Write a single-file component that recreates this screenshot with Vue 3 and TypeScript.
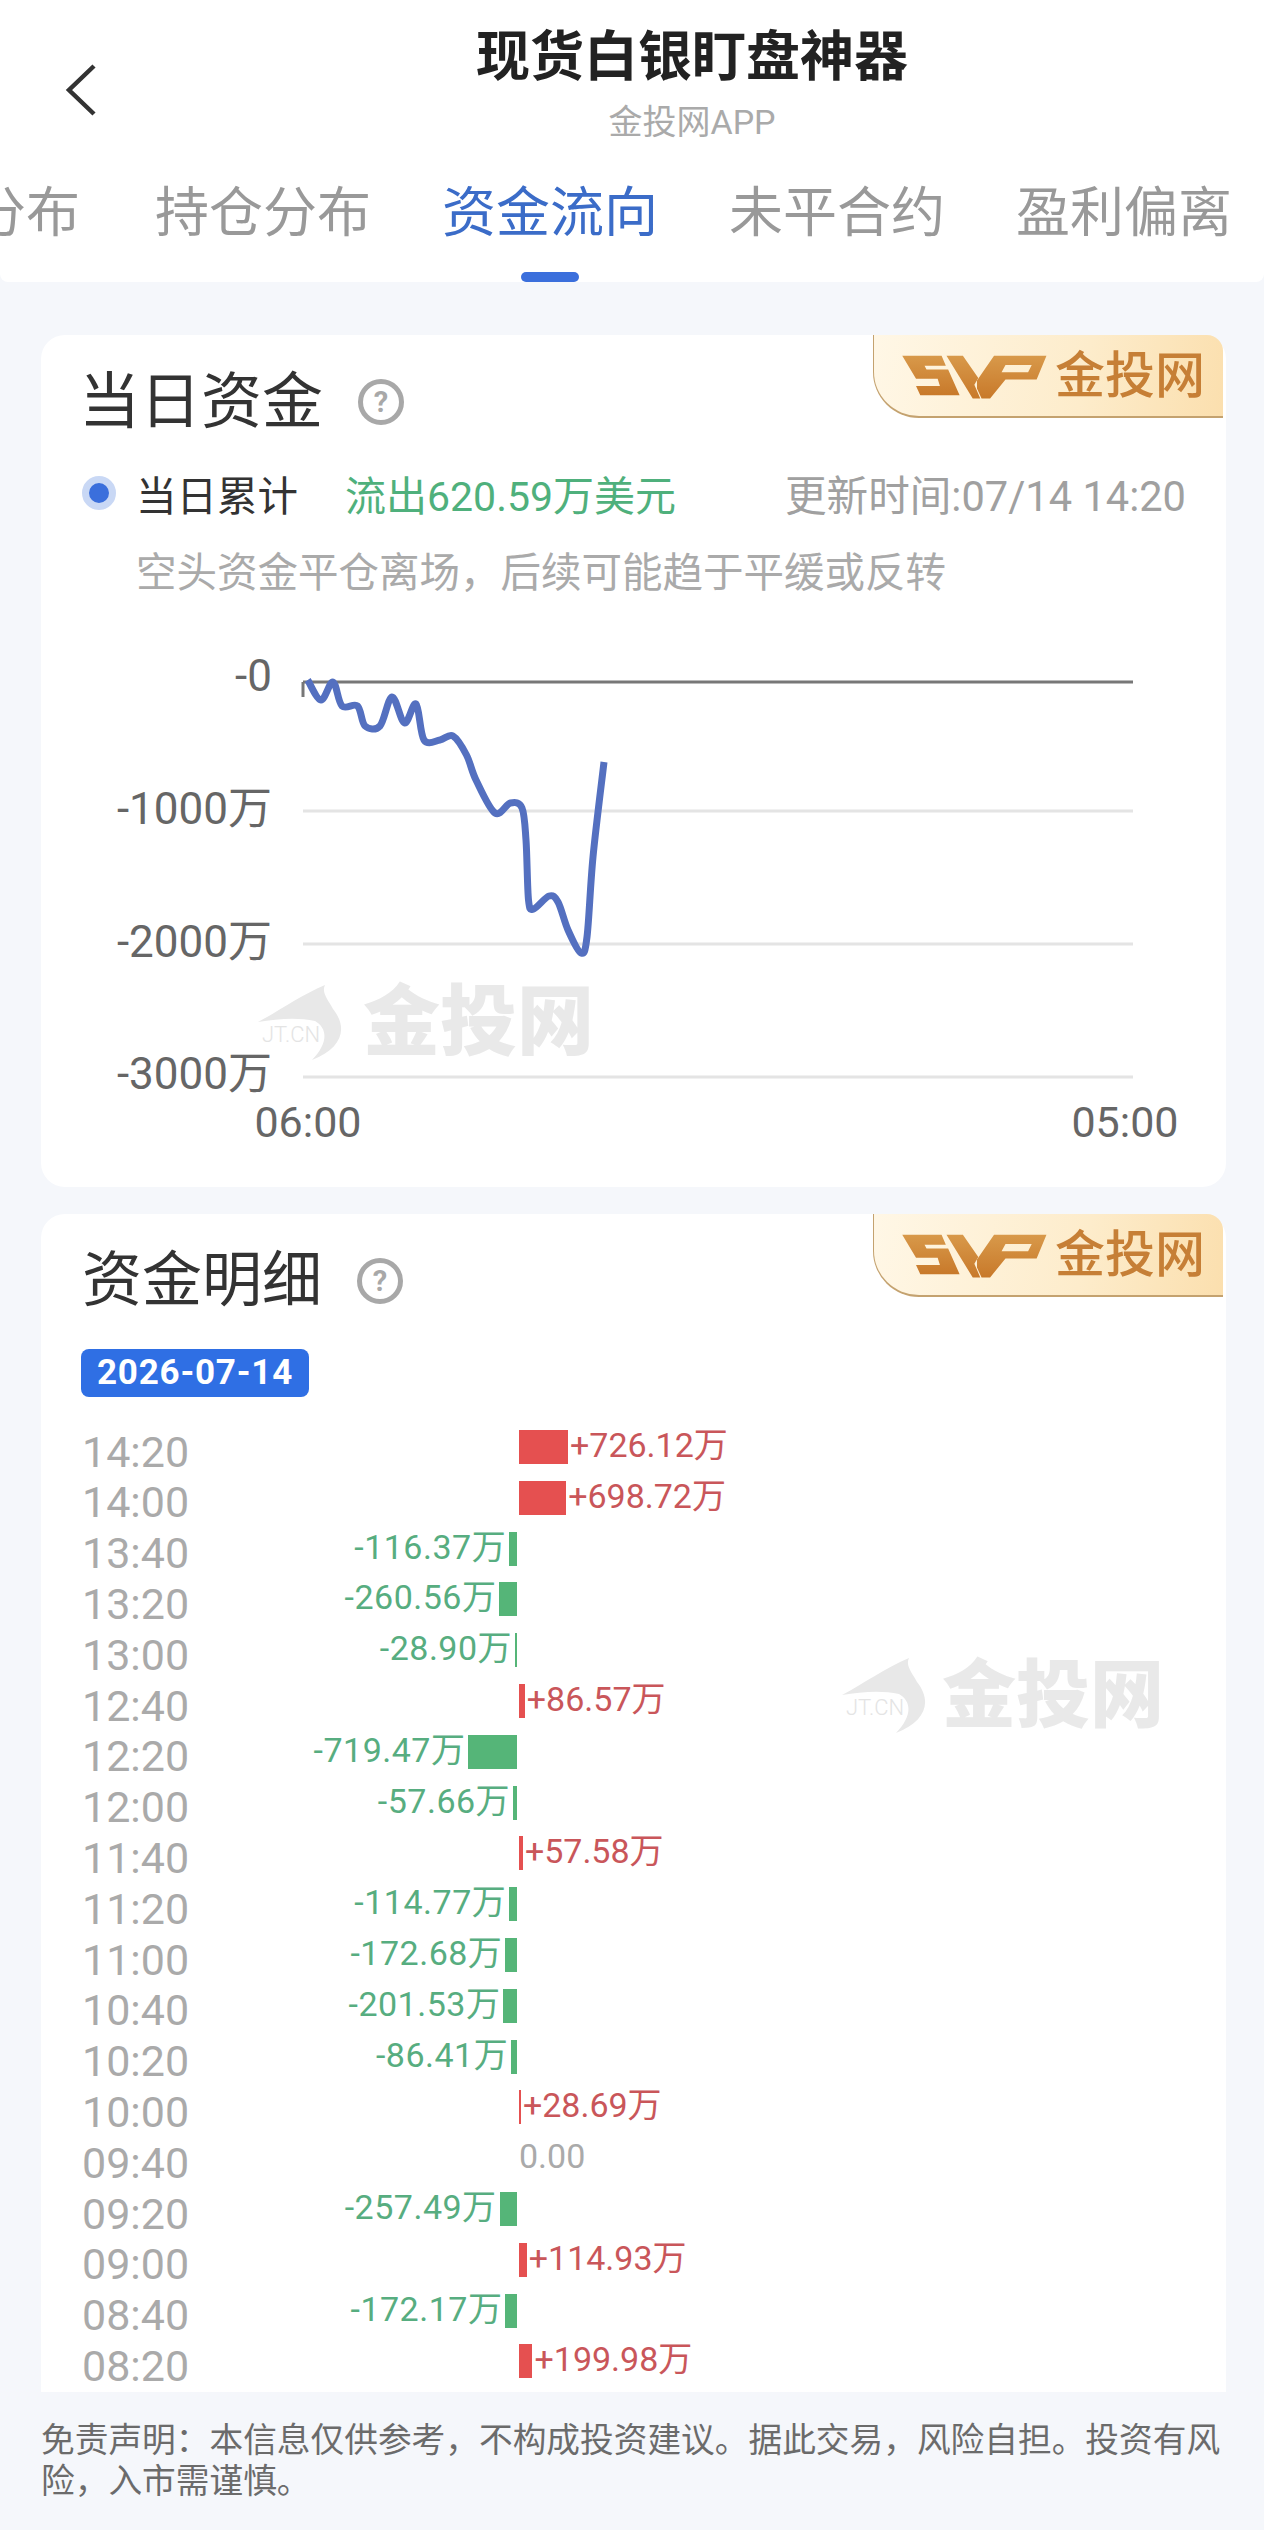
<script setup lang="ts">
const tabs = ['分布', '持仓分布', '资金流向', '未平合约', '盈利偏离']

const rows: [string, number][] = [
  ['14:20', 726.12], ['14:00', 698.72], ['13:40', -116.37], ['13:20', -260.56],
  ['13:00', -28.9], ['12:40', 86.57], ['12:20', -719.47], ['12:00', -57.66],
  ['11:40', 57.58], ['11:20', -114.77], ['11:00', -172.68], ['10:40', -201.53],
  ['10:20', -86.41], ['10:00', 28.69], ['09:40', 0], ['09:20', -257.49],
  ['09:00', 114.93], ['08:40', -172.17], ['08:20', 199.98],
]

const detail = rows.map(([time, value]) => ({
  time,
  value,
  width: Math.max(1, Math.abs(value) * 0.0675) + 'px',
  label:
    value === 0 ? '0.00' : (value > 0 ? '+' : '-') + Math.abs(value).toFixed(2) + '万',
}))

const pts: [number, number][] = [
  [307.7, 680], [321, 700], [333, 682], [342, 706], [357.5, 706], [365, 726], [380, 726],
  [392, 697], [404.5, 723], [416, 704], [424, 740], [440, 740], [453, 736], [466.5, 755],
  [476, 780], [495, 813], [510.5, 803], [522, 808], [526, 840], [528.5, 900], [533.5, 909],
  [549, 896], [558, 902], [568, 930], [581, 953], [587, 937], [593, 857], [604, 762],
]

function smooth(p: [number, number][]): string {
  let d = `M${p[0][0]} ${p[0][1]}`
  for (let i = 0; i < p.length - 1; i++) {
    const a = p[Math.max(i - 1, 0)]
    const b = p[i]
    const c = p[i + 1]
    const e = p[Math.min(i + 2, p.length - 1)]
    const k = 1 / 6
    const c1x = b[0] + (c[0] - a[0]) * k
    const c1y = b[1] + (c[1] - a[1]) * k
    const c2x = c[0] - (e[0] - b[0]) * k
    const c2y = c[1] - (e[1] - b[1]) * k
    d += ` C${c1x.toFixed(1)} ${c1y.toFixed(1)} ${c2x.toFixed(1)} ${c2y.toFixed(1)} ${c[0]} ${c[1]}`
  }
  return d
}
const curve = smooth(pts)
const grid = [811, 944, 1077]
const yLabels: [string, number][] = [['-0', 691], ['-1000万', 824], ['-2000万', 957], ['-3000万', 1089]]
</script>

<template>
  <div class="page">
    <header class="head">
      <div class="top">
        <svg class="back" viewBox="60 60 40 60" width="40" height="60">
          <path d="M94 66 L69 90 L94 114" />
        </svg>
        <div class="titles">
          <div class="title">现货白银盯盘神器</div>
          <div class="sub">金投网APP</div>
        </div>
      </div>
      <nav class="tabs">
        <div v-for="(t, i) in tabs" :key="t" class="tab" :class="{ on: i === 2 }">
          <span class="tab-text">{{ t }}</span>
          <i class="tab-bar"></i>
        </div>
      </nav>
    </header>

    <main class="main">
      <section class="card one">
        <div class="mark mark-a">
          <svg class="bird" viewBox="0 0 90 80" width="90" height="80">
            <path d="M1 39 C22 28 44 12 68 2 C64 10 72 18 76 26 C92 46 84 66 55 77 C70 62 72 46 58 38 C40 34 20 36 1 39 Z" />
          </svg>
          <span class="bird-text">JT.CN</span>
          <span class="mark-text">金投网</span>
        </div>
        <div class="svip">
          <svg class="svp" viewBox="0 0 510 180" width="168" height="59">
            <defs>
              <linearGradient id="gold" x1="0" y1="0" x2="0" y2="1">
                <stop offset="0" stop-color="#d8994a" />
                <stop offset="1" stop-color="#c8792a" />
              </linearGradient>
            </defs>
            <path fill="url(#gold)" d="M30 30H150L163 60H98L104 72H170L205 150H85L72 122H145L138 100H72Z" />
            <path fill="url(#gold)" d="M165 30H215L262 98L250 118L268 160H245Z" />
            <path fill="url(#gold)" fill-rule="evenodd" d="M258 105L310 30H470L440 102H345L298 160H272L258 130ZM345 58L333 80H414L425 58Z" />
          </svg>
          <span class="svip-text">金投网</span>
        </div>
        <div class="heading">
          <h2>当日资金</h2>
          <span class="q">?</span>
        </div>
        <div class="legend">
          <span class="dot"></span>
          <span class="legend-name">当日累计</span>
          <span class="legend-val">流出620.59万美元</span>
          <span class="legend-time">更新时间:07/14 14:20</span>
        </div>
        <p class="hint">空头资金平仓离场，后续可能趋于平缓或反转</p>
        <svg class="chart" viewBox="41 640 1185 547" width="1185" height="547">
          <line x1="303" y1="682" x2="1133" y2="682" stroke="#777" stroke-width="3" />
          <line x1="303" y1="682" x2="303" y2="697" stroke="#777" stroke-width="3" />
          <line v-for="y in grid" :key="y" x1="303" :y1="y" x2="1133" :y2="y" stroke="#e4e4e4" stroke-width="3" />
          <text v-for="l in yLabels" :key="l[0]" x="272" :y="l[1]" text-anchor="end" class="axis">{{ l[0] }}</text>
          <text x="308" y="1137" text-anchor="middle" class="axis x">06:00</text>
          <text x="1125" y="1137" text-anchor="middle" class="axis x">05:00</text>
          <path :d="curve" fill="none" stroke="#5470c0" stroke-width="7" />
        </svg>
      </section>

      <section class="card two">
        <div class="mark mark-b">
          <svg class="bird" viewBox="0 0 90 80" width="90" height="80">
            <path d="M1 39 C22 28 44 12 68 2 C64 10 72 18 76 26 C92 46 84 66 55 77 C70 62 72 46 58 38 C40 34 20 36 1 39 Z" />
          </svg>
          <span class="bird-text">JT.CN</span>
          <span class="mark-text">金投网</span>
        </div>
        <div class="svip">
          <svg class="svp" viewBox="0 0 510 180" width="168" height="59">
            <path fill="url(#gold)" d="M30 30H150L163 60H98L104 72H170L205 150H85L72 122H145L138 100H72Z" />
            <path fill="url(#gold)" d="M165 30H215L262 98L250 118L268 160H245Z" />
            <path fill="url(#gold)" fill-rule="evenodd" d="M258 105L310 30H470L440 102H345L298 160H272L258 130ZM345 58L333 80H414L425 58Z" />
          </svg>
          <span class="svip-text">金投网</span>
        </div>
        <div class="heading">
          <h2>资金明细</h2>
          <span class="q">?</span>
        </div>
        <div class="date">2026-07-14</div>
        <div class="rows">
          <div v-for="r in detail" :key="r.time" class="row">
            <span class="time">{{ r.time }}</span>
            <div class="neg">
              <template v-if="r.value < 0">
                <span class="val green">{{ r.label }}</span>
                <i class="bar bar-green" :style="{ width: r.width }"></i>
              </template>
            </div>
            <div class="pos">
              <template v-if="r.value > 0">
                <i class="bar bar-red" :style="{ width: r.width }"></i>
                <span class="val red">{{ r.label }}</span>
              </template>
              <span v-else-if="r.value === 0" class="val zero">{{ r.label }}</span>
            </div>
          </div>
        </div>
      </section>
    </main>

    <footer class="foot">免责声明：本信息仅供参考，不构成投资建议。据此交易，风险自担。投资有风险，入市需谨慎。</footer>
  </div>
</template>

<style scoped>
.page {
  width: 1264px;
  height: 2530px;
  overflow: hidden;
  background: #f5f7fb;
  font-family: Roboto, "Noto Sans CJK SC", sans-serif;
  color: #333;
}
.head {
  height: 282px;
  background: #fff;
  overflow: hidden;
  border-radius: 0 0 8px 8px;
  padding-top: 28px;
  box-sizing: border-box;
}
.top {
  display: grid;
  grid-template-columns: 120px 1fr;
}
.back {
  margin: 32px 0 0 60px;
  display: block;
}
.back path {
  fill: none;
  stroke: #333;
  stroke-width: 4.5;
}
.titles {
  text-align: center;
}
.title {
  font-size: 54px;
  line-height: 60px;
  font-weight: 700;
  color: #222;
}
.sub {
  margin-top: 14px;
  font-size: 34px;
  line-height: 40px;
  color: #aaa;
}
.tabs {
  display: flex;
  gap: 71px;
  margin: 37px 0 0 -28px;
  width: 1400px;
}
.tab {
  display: flex;
  flex-direction: column;
  align-items: center;
}
.tab:first-child {
  margin-right: 4px;
}
.tab-text {
  font-size: 54px;
  line-height: 70px;
  color: #999;
  white-space: nowrap;
}
.tab-bar {
  display: block;
  width: 58px;
  height: 10px;
  margin-top: 23px;
  border-radius: 5px;
}
.tab.on .tab-text {
  color: #3b6cc8;
}
.tab.on .tab-bar {
  background: #3b6fdc;
}
.main {
  padding: 53px 38px 0 41px;
  display: flex;
  flex-direction: column;
  gap: 27px;
}
.card {
  position: relative;
  background: #fff;
  box-sizing: border-box;
  padding: 37px 0 0 41px;
  border-radius: 24px;
}
.one {
  height: 852px;
}
.two {
  height: 1178px;
  border-radius: 24px 24px 0 0;
}
.svip {
  position: absolute;
  top: 0;
  right: 3px;
  width: 350px;
  height: 83px;
  box-sizing: border-box;
  border-left: 1.5px solid #c4a26f;
  border-bottom: 2px solid #c4a26f;
  border-radius: 0 16px 0 46px;
  background: linear-gradient(100deg, #fff7e6 0%, #fdeccb 60%, #fbdfae 100%);
  display: flex;
  align-items: center;
  padding-left: 18px;
}
.svp {
  display: block;
  flex: none;
}
.svip-text {
  margin-left: -5px;
  font-size: 50px;
  line-height: 56px;
  font-weight: 500;
  color: #c67f36;
  white-space: nowrap;
}
.heading {
  display: flex;
  align-items: center;
  height: 60px;
}
.heading h2 {
  margin: 0;
  font-size: 60px;
  line-height: 60px;
  font-weight: 400;
  color: #333;
}
.one .heading h2 {
  margin-left: -3px;
  font-size: 61px;
}
.q {
  margin-left: 35px;
  width: 46px;
  height: 46px;
  box-sizing: border-box;
  border: 5px solid #a8a8a8;
  border-radius: 50%;
  display: flex;
  align-items: center;
  justify-content: center;
  font-size: 29px;
  font-weight: 700;
  line-height: 1;
  color: #a8a8a8;
}
.legend {
  display: flex;
  align-items: center;
  height: 48px;
  margin-top: 37px;
  white-space: nowrap;
}
.dot {
  width: 20px;
  height: 20px;
  border-radius: 50%;
  background: #3b6fdc;
  border: 7px solid #c9d8f5;
  flex: none;
}
.legend-name {
  margin-left: 20px;
  font-size: 40.5px;
  color: #333;
}
.legend-val {
  margin-left: 47px;
  font-size: 41px;
  color: #4fb07c;
}
.legend-time {
  position: absolute;
  right: 40px;
  font-size: 41.6px;
  color: #a0a0a0;
}
.hint {
  margin: 32px 0 0 54px;
  font-size: 40.5px;
  line-height: 48px;
  color: #aaa;
  white-space: nowrap;
}
.chart {
  display: block;
  margin: 43px 0 0 -41px;
}
.axis {
  font-size: 44px;
  fill: #666;
}
.axis.x {
  font-size: 43px;
}
.mark {
  position: absolute;
  display: flex;
  align-items: center;
  height: 80px;
  width: 340px;
}
.mark-a {
  left: 216px;
  top: 648px;
}
.mark-b {
  left: 800px;
  top: 442px;
}
.mark-b .mark-text {
  margin-left: 11px;
  font-size: 74px;
}
.bird {
  display: block;
  flex: none;
}
.bird path {
  fill: #e8e8e8;
}
.bird-text {
  position: absolute;
  left: 5px;
  top: 41px;
  font-size: 22px;
  line-height: 22px;
  font-weight: 300;
  color: #e4e4e4;
}
.mark-text {
  margin-left: 16px;
  font-size: 77px;
  line-height: 80px;
  font-weight: 900;
  color: #e9e9e9;
  white-space: nowrap;
}
.date {
  margin: 38px 0 0 -1px;
  width: 228px;
  height: 48px;
  border-radius: 8px;
  background: #2f6fe4;
  color: #fff;
  font-size: 35px;
  font-weight: 700;
  line-height: 48px;
  text-align: center;
  letter-spacing: 0.8px;
}
.rows {
  margin-top: 29.6px;
}
.row {
  display: grid;
  grid-template-columns: 115px 320px 1fr;
  height: 50.8px;
}
.time {
  font-size: 43px;
  line-height: 50.8px;
  color: #aaa;
}
.neg,
.pos {
  display: flex;
  align-items: flex-start;
  padding-top: 3.4px;
  height: 34px;
  white-space: nowrap;
}
.neg {
  justify-content: flex-end;
  gap: 3px;
}
.pos {
  padding-left: 2px;
  gap: 2px;
}
.bar {
  display: block;
  height: 34px;
  flex: none;
}
.bar-green {
  background: #55b578;
}
.bar-red {
  background: #e55050;
}
.val {
  font-size: 34px;
  line-height: 30px;
}
.green {
  color: #57ad80;
  letter-spacing: 0.5px;
}
.red {
  color: #c9565a;
}
.zero {
  color: #aaa;
}
.foot {
  padding: 28px 30px 0 41px;
  font-size: 33.7px;
  line-height: 41px;
  color: #6b6b6b;
}
</style>
